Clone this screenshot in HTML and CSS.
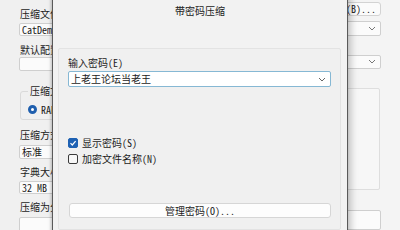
FILE: index.html
```html
<!DOCTYPE html>
<html lang="zh-CN">
<head>
<meta charset="utf-8">
<link rel="stylesheet" href="styles.css">
</head>
<body>
<div class="screen">
  <div class="bgwin">
    <div class="col-left">
      <div class="lbl">压缩文件名(A)</div>
      <div class="field f-name">CatDemo.rar</div>
      <div class="lbl l2">默认配置</div>
      <div class="field f-profile"></div>
      <fieldset class="group">
        <legend>压缩文件格式</legend>
        <div class="radio-row"><span class="radio"></span><span>RAR</span></div>
      </fieldset>
      <div class="lbl l3">压缩方式(C)</div>
      <div class="field f-method">标准</div>
      <div class="lbl l4">字典大小(I)</div>
      <div class="field f-dict">32 MB</div>
      <div class="lbl l4">压缩为分卷</div>
      <div class="field f-vol"></div>
    </div>
    <div class="col-right">
      <div class="btn-browse">浏览(B)...</div>
      <div class="field dd dd1"><span>更新模式 Folder</span><svg class="chev" width="8" height="5" viewBox="0 0 8 5"><path d="M1 1 L4 4 L7 1" fill="none" stroke="#777" stroke-width="1"/></svg></div>
      <div class="field dd dd2"><span></span><svg class="chev" width="8" height="5" viewBox="0 0 8 5"><path d="M1 1 L4 4 L7 1" fill="none" stroke="#777" stroke-width="1"/></svg></div>
      <div class="panel-r"></div>
      <div class="field f-r4"></div>
    </div>
  </div>

  <div class="dialog">
    <div class="title">带密码压缩</div>
    <div class="panel">
      <div class="plbl">输入密码(E)</div>
      <div class="combo"><span class="combo-text">上老王论坛当老王</span><svg class="chev" width="8" height="5" viewBox="0 0 8 5"><path d="M1 1 L4 4 L7 1" fill="none" stroke="#666" stroke-width="1"/></svg></div>
      <div class="chk-row r1"><span class="chk on"><svg width="8" height="8" viewBox="0 0 8 8"><path d="M1.5 4.2 L3.3 6 L6.6 2.2" fill="none" stroke="#fff" stroke-width="1.2"/></svg></span><span>显示密码(S)</span></div>
      <div class="chk-row r2"><span class="chk"></span><span>加密文件名称(N)</span></div>
      <div class="btn-manage">管理密码(O)...</div>
    </div>
  </div>
</div>
</body>
</html>
```
FILE: styles.css
```css
html, body {
  margin: 0;
  padding: 0;
}
body {
  width: 400px;
  height: 230px;
  overflow: hidden;
  background: #f0f0f0;
  font-family: "Noto Sans Mono CJK SC", "Liberation Mono", "Noto Sans CJK SC", monospace;
  font-size: 10px;
  color: #1c1c1c;
}
.screen {
  position: relative;
  width: 400px;
  height: 230px;
  overflow: hidden;
}
.bgwin {
  display: flex;
  justify-content: space-between;
  height: 230px;
  background: linear-gradient(to right, #f0f0f0 0 200px, #f4f4f4 200px);
}
.col-left {
  margin-left: 19px;
  width: 34px;
  overflow: hidden;
  padding-top: 8px;
  display: flex;
  flex-direction: column;
}
.col-left > * {
  flex-shrink: 0;
  width: 140px;
}
.lbl {
  height: 12px;
  line-height: 12px;
  margin-left: 1px;
  white-space: nowrap;
}
.field {
  box-sizing: border-box;
  background: #fbfbfb;
  border: 1px solid #cfcfcf;
  border-radius: 2px;
  line-height: 11px;
  padding-left: 2px;
  white-space: nowrap;
}
.f-name { margin-top: 3px; height: 13px; }
.l2 { margin-top: 8px; }
.f-profile { margin-top: 1px; height: 14px; }
.group {
  box-sizing: border-box;
  margin: 14px 0 0 1px;
  padding: 6px 0 4px 7px;
  border: 1px solid #dadada;
  border-radius: 3px;
}
.group legend {
  padding: 0 2px;
  line-height: 12px;
  height: 12px;
  white-space: nowrap;
}
.radio-row {
  display: flex;
  align-items: center;
  gap: 4px;
  height: 12px;
}
.radio {
  box-sizing: border-box;
  width: 9px;
  height: 9px;
  border-radius: 50%;
  border: 3px solid #1f5fae;
  background: #fff;
}
.l3 { margin-top: 9px; }
.f-method { margin-top: 4px; height: 14px; line-height: 12px; }
.l4 { margin-top: 7px; }
.f-dict { margin-top: 3px; height: 13px; }
.f-vol { margin-top: 4px; height: 20px; }

.col-right {
  margin-right: 19px;
  width: 140px;
  padding-top: 2px;
  display: flex;
  flex-direction: column;
  align-items: flex-end;
}
.btn-browse {
  box-sizing: border-box;
  width: 60px;
  height: 14px;
  border: 1px solid #d3d3d3;
  border-radius: 3px;
  background: #fbfbfb;
  text-align: center;
  line-height: 12px;
  white-space: nowrap;
}
.dd {
  width: 140px;
  height: 15px;
  display: flex;
  align-items: center;
  justify-content: space-between;
  padding-right: 4px;
}
.dd1 { margin-top: 5px; }
.dd2 { margin-top: 19px; }
.panel-r {
  box-sizing: border-box;
  margin-top: 19px;
  margin-right: 1px;
  width: 139px;
  height: 105px;
  border: 1px solid #dedede;
  border-radius: 2px;
  background: #f7f7f7;
}
.f-r4 { margin-top: 20px; width: 140px; height: 20px; }

.dialog {
  position: absolute;
  left: 52px;
  top: -6px;
  box-sizing: border-box;
  width: 296px;
  height: 250px;
  background: #f2f2f2;
  border: 1px solid #5a5a5a;
  box-shadow: 3px 0 7px rgba(0, 0, 0, 0.22), -1px 0 3px rgba(0, 0, 0, 0.2);
  padding-top: 10px;
}
.title {
  text-align: center;
  height: 12px;
  line-height: 12px;
  font-family: "Noto Sans CJK SC", sans-serif;
  color: #222;
}
.panel {
  box-sizing: border-box;
  margin: 31px 6px 0 5px;
  width: 283px;
  height: 182px;
  border: 1px solid #e3e3e3;
  border-radius: 2px;
  background: #f0f0f0;
  padding: 8px 0 0 9px;
  display: flex;
  flex-direction: column;
}
.plbl {
  height: 12px;
  line-height: 12px;
}
.combo {
  box-sizing: border-box;
  margin-top: 2px;
  width: 263px;
  height: 16px;
  border: 1px solid #86b8d4;
  border-radius: 2px;
  background: #fff;
  display: flex;
  align-items: center;
  justify-content: space-between;
  padding: 0 4px 0 2px;
}
.combo-text {
  line-height: 12px;
}
.chk-row {
  display: flex;
  align-items: center;
  gap: 4px;
  height: 12px;
  line-height: 12px;
}
.r1 { margin-top: 50px; }
.r2 { margin-top: 4px; }
.chk {
  box-sizing: border-box;
  width: 10px;
  height: 10px;
  border: 1px solid #3a3a3a;
  border-radius: 2px;
  background: #f7f7f7;
  display: flex;
  align-items: center;
  justify-content: center;
}
.chk.on {
  background: #1e61b3;
  border-color: #1e61b3;
}
.btn-manage {
  box-sizing: border-box;
  margin: 38px 0 0 1px;
  width: 262px;
  height: 15px;
  border: 1px solid #d6d6d6;
  border-radius: 3px;
  background: #fdfdfd;
  text-align: center;
  line-height: 13px;
}
```
